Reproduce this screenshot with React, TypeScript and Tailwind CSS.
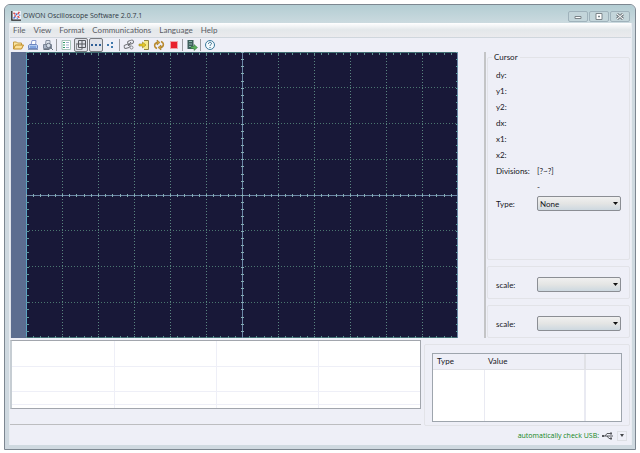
import React from 'react';

const menus = ['File', 'View', 'Format', 'Communications', 'Language', 'Help'];
const cursorRows = ['dy:', 'y1:', 'y2:', 'dx:', 'x1:', 'x2:'];

// grid geometry of the scope screen
const W = 432;
const H = 286;
const COLS = 12;
const ROWS = 8;
const colX = (i: number) => Math.min(W - 0.5, Math.floor((i * W) / COLS) + 0.5);
const rowY = (i: number) => Math.min(H - 0.5, Math.floor((i * H) / ROWS) + 0.5);

const Scope = () => (
  <svg viewBox={`0 0 ${W} ${H}`} preserveAspectRatio="none" className="h-full w-full bg-[#181838]" shapeRendering="crispEdges">
    {Array.from({ length: COLS - 1 }, (_, i) => (
      <line key={`c${i}`} x1={colX(i + 1)} x2={colX(i + 1)} y1="0" y2={H} stroke="#5a8580" strokeDasharray="1 2" />
    ))}
    {Array.from({ length: ROWS - 1 }, (_, i) => (
      <line key={`r${i}`} x1="0" x2={W} y1={rowY(i + 1)} y2={rowY(i + 1)} stroke="#4b7670" strokeDasharray="1 2" />
    ))}
    <path d={`M0 .5H${W}M0 ${H - 0.5}H${W}`} stroke="#3f6d72" />
    <path d={`M${W - 0.5} 0V${H}`} stroke="#6b86a6" />
    <path d={`M.5 0V${H}`} stroke="#5ba3c4" />
    <path d={`M0 1.5H${W}M0 ${H - 1.5}H${W}`} stroke="#5f8f90" strokeWidth="2" strokeDasharray="1 6.2" />
    <path d={`M1 0V${H}M${W - 1} 0V${H}`} stroke="#5f9aa0" strokeWidth="3" strokeDasharray="1 6.15" />
    <path d={`M0 ${H / 2 + 0.5}H${W}M${W / 2 + 0.5} 0V${H}`} stroke="#6b86a6" />
    <path d={`M0 ${H / 2 + 0.5}H${W}`} stroke="#84aeb4" strokeWidth="3" strokeDasharray="1 6.2" />
    <path d={`M${W / 2 + 0.5} 0V${H}`} stroke="#84aeb4" strokeWidth="3" strokeDasharray="1 6.15" />
  </svg>
);

const Icon = ({ children }: { children: React.ReactNode }) => (
  <svg viewBox="0 0 12 12" className="h-3 w-3 shrink-0" fill="none">
    {children}
  </svg>
);

interface ToolProps {
  label: string;
  active?: boolean;
  children: React.ReactNode;
}

const Tool: React.FC<ToolProps> = ({ label, active, children }) => (
  <button
    aria-label={label}
    className={`flex h-[14px] w-[14px] items-center justify-center rounded-xs ${active ? 'border border-[#77797e] bg-[#dfe1e8]' : ''}`}
  >
    <Icon>{children}</Icon>
  </button>
);

const Group = ({ children }: { children: React.ReactNode }) => <div className="flex gap-px">{children}</div>;

const Sep = () => <span className="mr-0.5 ml-px h-3 w-px bg-[#9a9ba0]" />;

const Toolbar = () => (
  <div className="flex h-[15px] items-center border-t border-[#cfd6dd] bg-[#eeeff7] pl-px">
    <Group>
      <Tool label="Open">
        <path d="M1.500 10V3h3l1 1h4v2" stroke="#c39a45" fill="#f9e3a0" />
        <path d="M1.500 10l2-4h8l-2 4z" stroke="#c08a20" fill="#fbe09a" />
      </Tool>
      <Tool label="Print">
        <path d="M4 6l1-4.500h4L8.500 6" stroke="#8c9cd0" fill="#fff" />
        <path d="M1.500 6.500l1-1h7l1 1v3h-9z" stroke="#6c86c0" fill="#b4cbf0" />
        <path d="M1 10.500h10" stroke="#8797b8" />
        <path d="M3 8h6" stroke="#4c7ccc" />
      </Tool>
      <Tool label="Print preview">
        <path d="M3.500 6l.5-4.500h4L8 6" stroke="#8a93a4" fill="#dfe5ee" />
        <path d="M1.500 5.500h8v4h-8z" stroke="#7c8698" fill="#a9b4c6" />
        <circle cx="6.500" cy="6.500" r="2.200" stroke="#6a7282" fill="#d5deea" />
        <path d="M8 8l3 3M1.500 10.500h6" stroke="#66707f" />
      </Tool>
    </Group>
    <Sep />
    <Group>
      <Tool label="List">
        <path d="M2 1.500h8.500v9H2z" stroke="#a8c4ba" fill="#fff" />
        <path d="M3 3.500h2M3 6h2M3 8.500h2" stroke="#2f9a68" />
        <path d="M6 3.500h3M6 6h3M6 8.500h3" stroke="#9fb1cc" />
      </Tool>
      <Tool label="Grid" active>
        <path d="M3.500 1.500h7v7h-7zM7 1.500v9M1 5h9.500" stroke="#55575d" />
        <path d="M1.500 5v5.500H7" stroke="#8a8c92" />
      </Tool>
      <Tool label="Dots" active>
        <path d="M1 5h2v2H1zM5 5h2v2H5zM9 5h2v2H9z" fill="#2f5f98" />
      </Tool>
      <Tool label="Scatter">
        <path d="M2 5h2v2H2zM6 3h2v2H6zM6 7h2v2H6z" fill="#3f78ac" />
      </Tool>
    </Group>
    <Sep />
    <Group>
      <Tool label="Link">
        <rect x="4.500" y="1.500" width="6" height="3.500" rx="1.700" stroke="#74767b" transform="rotate(-20 7.500 3)" />
        <rect x="1" y="5.500" width="6" height="3.500" rx="1.700" stroke="#74767b" transform="rotate(-20 4 7)" />
        <circle cx="8.500" cy="8.500" r="1.500" stroke="#85878c" />
        <path d="M5 7l3-4" stroke="#606268" />
      </Tool>
      <Tool label="Import">
        <path d="M6 1.500h4.500v9H6" stroke="#8f8445" fill="#f5e98c" />
        <path d="M1 5h3.500V3L8 6 4.500 9V7H1z" fill="#e5c924" stroke="#9a8722" strokeWidth=".6" />
      </Tool>
      <Tool label="Refresh">
        <path d="M4 9.500C.5 8 1 4 4.500 3.500" stroke="#b98a30" strokeWidth="1.500" />
        <path d="M4 1l3 2.500L4 6z" fill="#d9a534" stroke="#876520" strokeWidth=".5" />
        <path d="M8 2.500c3.500 1.500 3 5.500-.5 6" stroke="#b98a30" strokeWidth="1.500" />
        <path d="M8 6L5 8.500 8 11z" fill="#d9a534" stroke="#876520" strokeWidth=".5" />
      </Tool>
      <Tool label="Stop">
        <path d="M2 2h8v8H2z" fill="#f0a3a8" />
        <path d="M3 3h6v6H3z" fill="#e8202c" />
      </Tool>
    </Group>
    <Sep />
    <Tool label="Export">
      <path d="M1.500 1h6v9h-6z" fill="#3e5f5c" />
      <path d="M3 2.500h3M3 5h3M3 7.500h2" stroke="#8fb8b0" />
      <path d="M5 7.500h3V5.500l3.500 3L8 11.500v-2H5z" fill="#5bb05c" stroke="#2f7040" strokeWidth=".5" />
    </Tool>
    <Sep />
    <Tool label="Help">
      <circle cx="6" cy="6" r="4.500" stroke="#3b7a9c" fill="#f5fafd" />
      <path d="M4.500 4.800c0-2 3-2 3-.2 0 1-1.500 1-1.500 2.200M6 8v1" stroke="#2d6788" />
    </Tool>
  </div>
);

interface ComboProps {
  id: string;
  label: string;
  value?: string;
}

const Combo: React.FC<ComboProps> = ({ id, label, value = '' }) => (
  <div className="flex items-center">
    <label htmlFor={id} className="w-[41px]">{label}</label>
    <div className="relative flex-1">
      <select
        id={id}
        className="block h-[15px] w-full appearance-none rounded-xs border border-[#8b8e94] bg-linear-to-b from-[#f0f0f0] via-[#e4e5e4] to-[#cdd8e0] px-0.5 text-[8px] leading-3"
      >
        <option>{value}</option>
      </select>
      <svg viewBox="0 0 5 3" className="pointer-events-none absolute top-1.5 right-[3px] h-[3px] w-[5px]">
        <path d="M0 0h5L2.500 3z" fill="#111" />
      </svg>
    </div>
  </div>
);

const WinButton = ({ label, children }: { label: string; children: React.ReactNode }) => (
  <button aria-label={label} className="flex h-[11px] w-5 items-center justify-center rounded-xs border border-[#9fb2bb] bg-[#c3d5da]">
    <svg viewBox="0 0 8 7" className="h-[7px] w-2" fill="none" stroke="#7b8489">{children}</svg>
  </button>
);

const TitleBar = () => (
  <header className="flex h-[18px] items-center bg-linear-to-b from-[#b3cdd3] to-[#cbdadf] pt-1 pr-[5px] pl-1.5">
    <svg viewBox="0 0 12 12" className="mr-0.5 h-2.5 w-2.5" fill="none">
      <path d="M1 0h11v11H1z" fill="#eef2f8" />
      <path d="M1 0v11h11" stroke="#222" strokeWidth="1.500" />
      <path d="M3 2l2 2M10 1L8 4M4 6h2M8 6l2 2" stroke="#d94a4a" strokeWidth="1.800" />
      <path d="M3 9l2-2M6 3l1 2M7 9l1-1M10 5h1" stroke="#4a6fd0" strokeWidth="1.800" />
    </svg>
    <h1 className="flex-1 font-['Open_Sans',sans-serif] text-[7px] text-[#2f3842]">OWON Oscilloscope Software 2.0.7.1</h1>
    <div className="flex gap-px">
      <WinButton label="Minimize"><path d="M1 3.500h6v2H1z" fill="#fff" /></WinButton>
      <WinButton label="Maximize"><path d="M1 .5h6v6H1zM3.500 3h1v1h-1z" fill="#fff" /></WinButton>
      <WinButton label="Close">
        <path d="M1 1l6 5M7 1L1 6" strokeWidth="3" />
        <path d="M1 1l6 5M7 1L1 6" stroke="#fff" />
      </WinButton>
    </div>
  </header>
);

const CursorPanel = () => (
  <aside className="flex w-[147px] flex-col gap-1.5 border-l-2 border-[#c3c4c6] px-px">
    <fieldset className="h-[208px] rounded-xs border border-[#e2e3e8] px-2">
      <legend className="-ml-1 px-0.5 leading-[10px]">Cursor</legend>
      <div className="mt-[5px]">
        {cursorRows.map((row) => (
          <div key={row} className="h-4 leading-4">{row}</div>
        ))}
        <div className="flex h-4 leading-4">
          <span className="w-[41px]">Divisions:</span>
          <span>[?~?]</span>
        </div>
        <div className="h-4 pl-[41px] leading-4">-</div>
      </div>
      <div className="mt-px">
        <Combo id="type" label="Type:" value="None" />
      </div>
    </fieldset>
    <div className="h-[33px] rounded-xs border border-[#e2e3e8] px-2 pt-2.5">
      <Combo id="scale1" label="scale:" />
    </div>
    <div className="h-[33px] rounded-xs border border-[#e2e3e8] px-2 pt-2.5">
      <Combo id="scale2" label="scale:" />
    </div>
  </aside>
);

const MeasureTable = () => (
  <div className="border border-l-2 border-[#a2a6ad] border-l-[#c6cdd3] bg-white">
    <table className="w-full table-fixed border-collapse">
      <tbody>
        {['h-[25px]', 'h-[25px]', 'h-[13px]', 'h-[4px]'].map((height, r) => (
          <tr key={r} className={height}>
            {[0, 1, 2, 3].map((c) => (
              <td key={c} className={`border-[#eeeff7] p-0 ${c < 3 ? 'border-r' : ''} ${r < 3 ? 'border-b' : ''}`} />
            ))}
          </tr>
        ))}
      </tbody>
    </table>
  </div>
);

const App = () => (
  <div className="min-h-screen bg-white p-1 font-['Lato',sans-serif] text-[8px] leading-3 text-[#15161c]">
    <div className="overflow-hidden rounded-t-md border border-[#7d8791] bg-[#cfd9e0] pb-1">
      <TitleBar />
      <div className="mr-[3px] ml-1 border-x border-[#e9edf2] bg-[#eeeff7]">
        <nav className="flex h-[14px] items-center gap-2 bg-linear-to-b from-white via-[#e3e7ea] to-[#ebebee] px-[3px] text-[#5a5c64]">
          {menus.map((menu) => (
            <button key={menu}>{menu}</button>
          ))}
        </nav>
        <Toolbar />
        <div className="flex h-[286px]">
          <div className="w-4 border-l border-[#dfe3ea] bg-[#5c6d90]" />
          <div className="flex-1"><Scope /></div>
          <div className="w-[26px]" />
          <CursorPanel />
        </div>
        <div className="flex gap-[3px] pt-0.5 pr-px">
          <div className="flex-1">
            <MeasureTable />
            <div className="h-4 border-b border-[#bcbdc0]" />
          </div>
          <div className="w-[206px] pt-1">
            <div className="h-[82px] rounded-xs border border-[#e2e3e8] px-[7px] pt-2">
              <div className="border border-[#9ea5ad] bg-white">
                <table className="h-[67px] w-full table-fixed border-collapse">
                  <thead>
                    <tr className="h-[15px] bg-[#eeeff7] text-left">
                      <th className="w-[51px] border-b border-[#e0e1e6] px-1 py-0 font-normal">Type</th>
                      <th className="w-[101px] border-b border-[#e0e1e6] px-1 py-0 font-normal">Value</th>
                      <th className="border-b border-l-2 border-[#e0e1e6] p-0" />
                    </tr>
                  </thead>
                  <tbody>
                    <tr>
                      <td />
                      <td className="border-r-2 border-l border-[#e9eaf2]" />
                      <td />
                    </tr>
                  </tbody>
                </table>
              </div>
            </div>
          </div>
        </div>
        <footer className="flex h-[19px] items-center justify-end gap-[3px] pr-1 text-[#118518]">
          <span className="font-['Open_Sans',sans-serif] text-[7px]">automatically check USB:</span>
          <svg viewBox="0 0 12 8" className="h-2 w-3" fill="none" stroke="#55575c">
            <path d="M1 4h10M3 4l2-2.500h3M5 4l2 2.500h2" />
            <path d="M0 3h2v2H0zM8 .5h2v2H8zM8 5.500h2v2H8z" fill="#55575c" stroke="none" />
          </svg>
          <button aria-label="USB options" className="flex h-2.5 w-2.5 items-center justify-center border border-[#dddfe4]">
            <svg viewBox="0 0 4 3" className="h-[3px] w-1"><path d="M0 0h4L2 3z" fill="#44464a" /></svg>
          </button>
        </footer>
      </div>
    </div>
  </div>
);

export default App;
